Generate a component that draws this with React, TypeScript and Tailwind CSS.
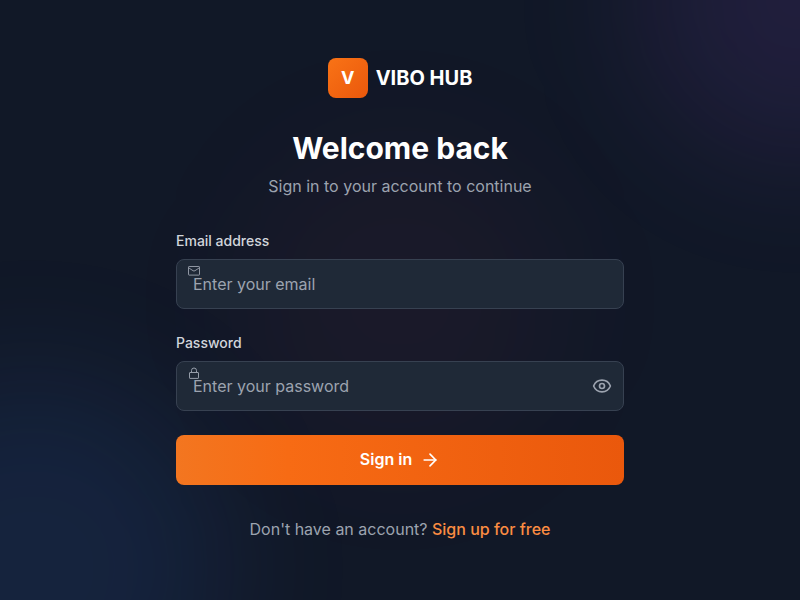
import { ArrowRight, Eye } from "lucide-react";

function MailIcon() {
  return (
    <svg className="absolute left-3 top-[6px] h-3 w-3 text-[#9ca3af]" viewBox="0 0 12 12" fill="none" stroke="currentColor" strokeWidth="0.9" strokeLinejoin="round">
      <rect x="0.5" y="1.5" width="11" height="8.6" rx="0.6" />
      <path d="M0.8 2.9 5 5.7Q6 6.3 7 5.7L11.2 2.9" />
    </svg>
  );
}

function LockIcon() {
  return (
    <svg className="absolute left-3 top-[6px] h-3 w-3 text-[#9ca3af]" viewBox="0 0 12 12" fill="none" stroke="currentColor" strokeWidth="0.95" strokeLinejoin="round">
      <rect x="1.5" y="5.5" width="9" height="5.9" rx="0.5" />
      <path d="M3.5 5.5V3.5a2.5 2.5 0 0 1 5 0V5.5" />
    </svg>
  );
}

export default function App() {
  return (
    <main className="relative flex h-screen w-full items-center justify-center overflow-hidden bg-[#111827] font-['Inter',sans-serif] text-base">
      <div className="absolute -right-40 -top-40 h-80 w-80 rounded-full bg-[#a855f7]/10 blur-3xl" />
      <div className="absolute -bottom-40 -left-40 h-96 w-96 rounded-full bg-[#3b82f6]/11 blur-3xl" />
      <div className="absolute left-1/2 top-1/2 h-80 w-80 -translate-x-1/2 -translate-y-1/2 rounded-full bg-[#f9315c]/4 blur-3xl" />
      <div className="relative w-[448px] pb-px">
        <header className="text-center">
          <div className="mb-8 flex items-center justify-center gap-2">
            <div className="flex h-10 w-10 items-center justify-center rounded-lg bg-[linear-gradient(to_bottom_right,#f97316,#ea580c)] text-lg font-bold text-white">V</div>
            <span className="text-xl font-bold text-white">VIBO HUB</span>
          </div>
          <h1 className="mb-2 text-3xl font-bold text-white">Welcome back</h1>
          <p className="text-[#9ca3af]">Sign in to your account to continue</p>
        </header>
        <form className="mt-[33px] space-y-6">
          <div>
            <label htmlFor="email" className="mb-2 block text-sm font-medium text-[#d1d5db]">Email address</label>
            <div className="relative">
              <input id="email" type="email" placeholder="Enter your email" className="block h-[50px] w-full rounded-lg border border-[#374151] bg-[#1f2937] px-4 text-white placeholder:text-[#9ca3af]" />
              <MailIcon />
            </div>
          </div>
          <div>
            <label htmlFor="password" className="mb-2 block text-sm font-medium text-[#d1d5db]">Password</label>
            <div className="relative">
              <input id="password" type="password" placeholder="Enter your password" className="block h-[50px] w-full rounded-lg border border-[#374151] bg-[#1f2937] px-4 text-white placeholder:text-[#9ca3af]" />
              <LockIcon />
              <button type="button" aria-label="Show password" className="absolute inset-y-0 right-3 flex items-center text-[#9ca3af]"><Eye size={20} /></button>
            </div>
          </div>
          <button type="button" className="flex h-[50px] w-full items-center justify-center rounded-lg bg-[linear-gradient(to_right,#f37620,#f76b14_25%,#ea580c)] font-semibold text-white">
            <span className="pb-0.5">Sign in</span>
            <ArrowRight size={20} className="ml-2" />
          </button>
        </form>
        <p className="mt-8 text-center text-[#9ca3af]">
          Don't have an account? <a className="font-medium text-[#fb8c42]">Sign up for free</a>
        </p>
      </div>
    </main>
  );
}
